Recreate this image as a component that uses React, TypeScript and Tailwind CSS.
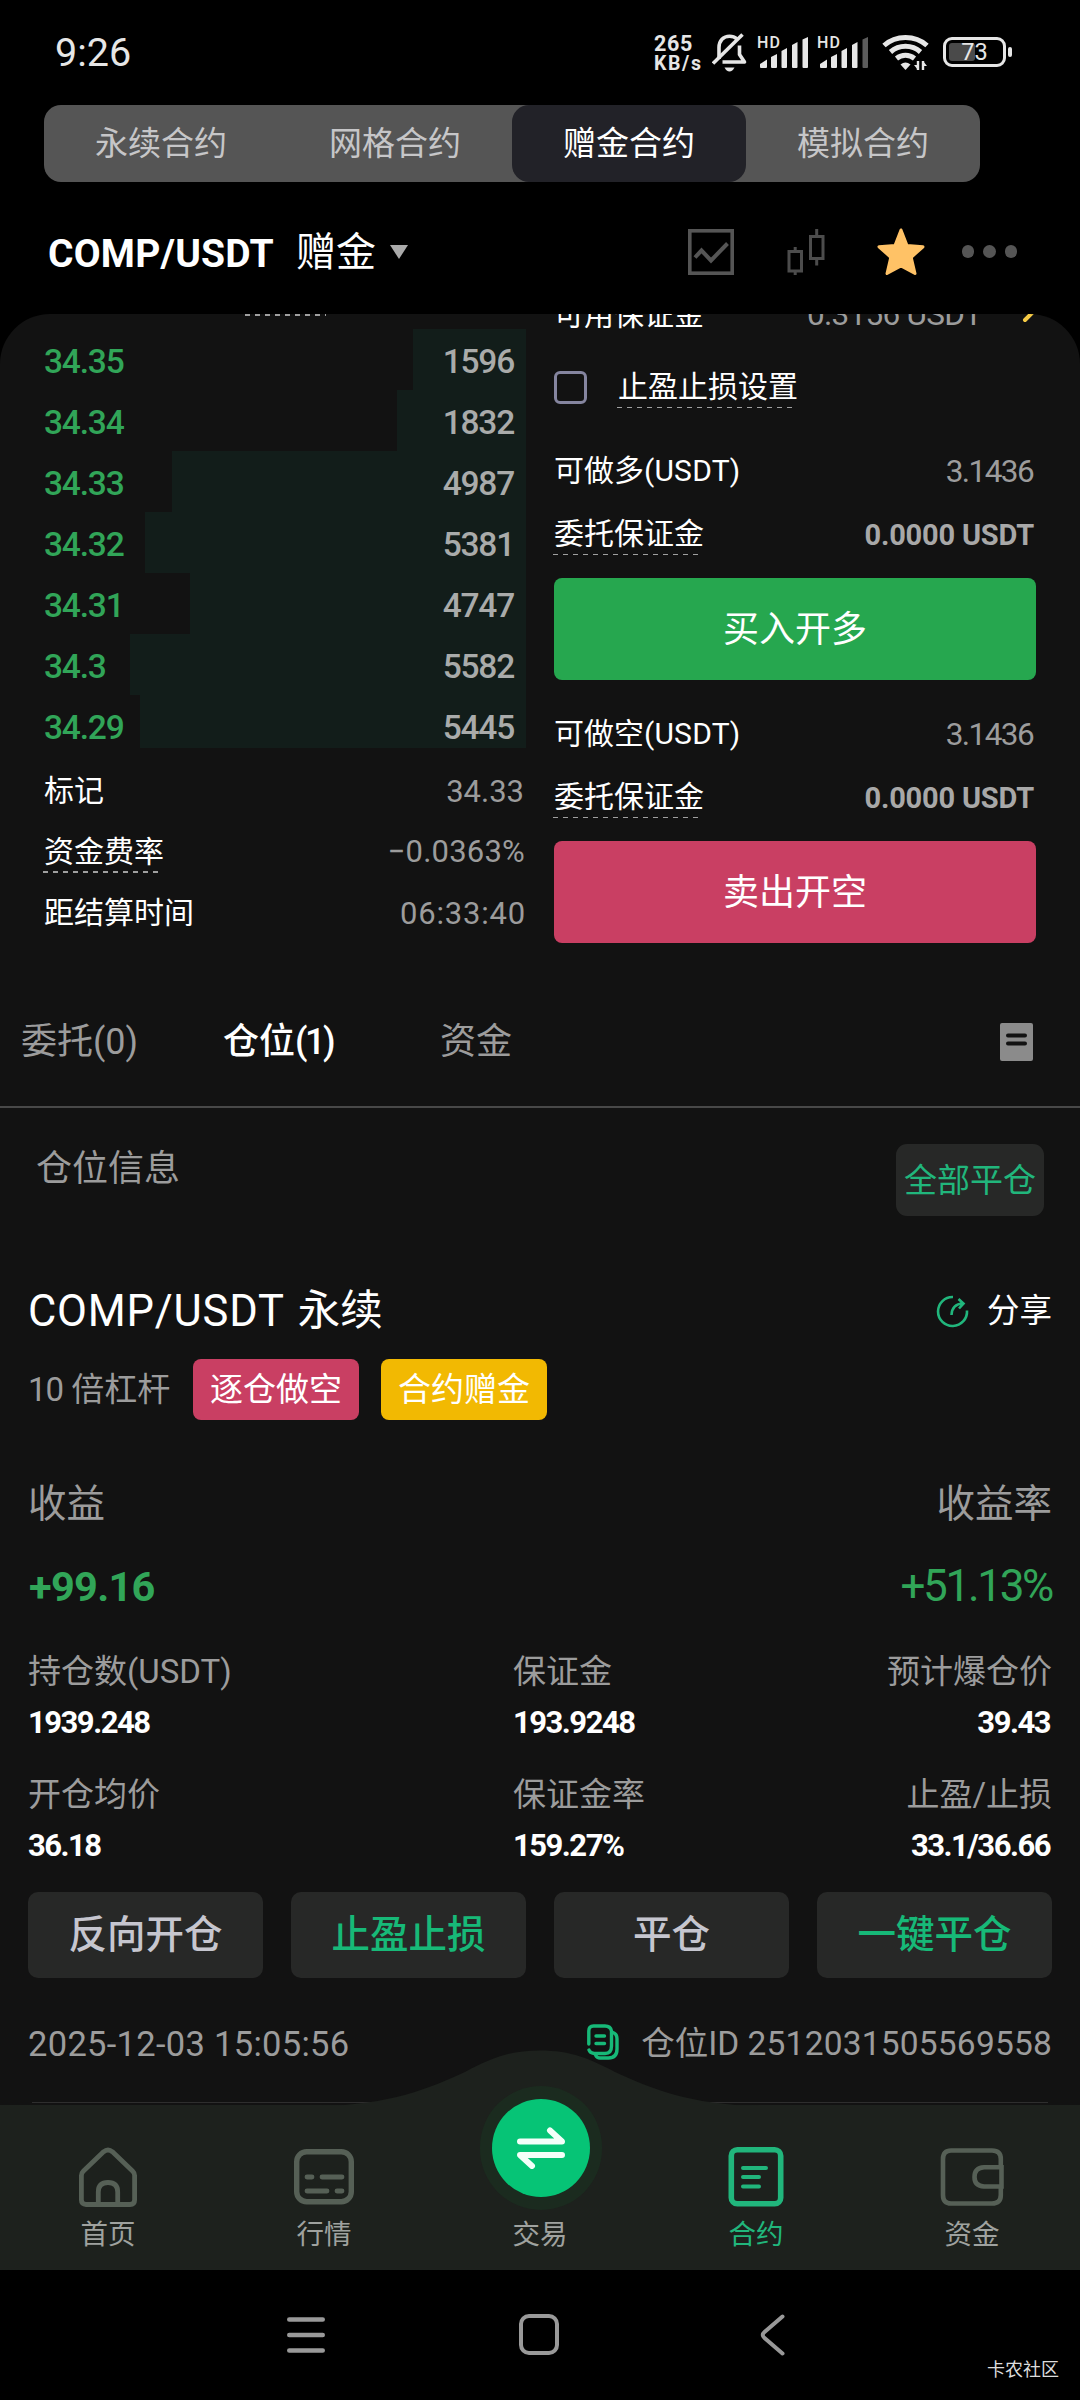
import React from "react";
import clsx from "clsx";

const modes = ["永续合约", "网格合约", "赠金合约", "模拟合约"];

const bids = [
  { price: "34.35", amount: "1596", depth: 113 },
  { price: "34.34", amount: "1832", depth: 129 },
  { price: "34.33", amount: "4987", depth: 354 },
  { price: "34.32", amount: "5381", depth: 381 },
  { price: "34.31", amount: "4747", depth: 336 },
  { price: "34.3", amount: "5582", depth: 396 },
  { price: "34.29", amount: "5445", depth: 386 },
];

const actions = [
  { label: "反向开仓", green: false },
  { label: "止盈止损", green: true },
  { label: "平仓", green: false },
  { label: "一键平仓", green: true },
];

function Dashes({ className }: { className?: string }) {
  return (
    <div className={clsx("bg-[repeating-linear-gradient(90deg,#a0a0a0_0,#a0a0a0_5px,transparent_5px,transparent_10px)]", className)} />
  );
}

function Dotted({ children }: { children: React.ReactNode }) {
  return (
    <div className="relative">
      {children}
      <Dashes className="absolute h-[1.500px] -left-[1px] right-[2px] -bottom-[6px]" />
    </div>
  );
}

function Signal({ weak }: { weak?: boolean }) {
  return (
    <div className="relative w-[50px] h-[33px]">
      <span className="absolute -left-[3px] -top-[1px] text-[16px] leading-none font-medium tracking-[1.2px]">HD</span>
      <svg viewBox="0 0 50 33" className="w-[50px] h-[33px]" fill="currentColor">
        <path d="M0 31V28L7 23.500V31Q7 32 6 32H1Q0 32 0 31Z" />
        <path d="M11 31V21L17 18V31Q17 32 16 32H12Q11 32 11 31Z" />
        <path d="M21.500 31V15L27 12V31Q27 32 26 32H22.500Q21.500 32 21.500 31Z" />
        <path d="M32 31V9L37.500 6V31Q37.500 32 36.500 32H33Q32 32 32 31Z" />
        <path d="M42.500 31V3.500L48 1V31Q48 32 47 32H43.500Q42.500 32 42.500 31Z" opacity={weak ? 0.4 : 1} />
      </svg>
    </div>
  );
}

function StatusBar() {
  return (
    <div className="h-[105px] flex justify-between pl-[55px] pr-[68px] text-[#e6e6e6]">
      <div className="mt-[33px] text-[39.500px] leading-[40px]">9:26</div>
      <div className="flex items-start">
        <div className="mt-[34px] w-[51px] mr-[7px] font-bold text-[21.500px]">
          <div className="h-[20px] leading-[20px] tracking-[0.7px]">265</div>
          <div className="h-[20px] leading-[20px] text-[19.500px] tracking-[1.6px] whitespace-nowrap">KB/s</div>
        </div>
        <svg viewBox="0 0 36 40" className="w-[36px] h-[40px] mt-[33px] mr-[12px]" fill="none" stroke="currentColor" strokeWidth="3.600">
          <path d="M7 26V14.500C7 7.500 11.500 3.200 17.500 3.200C20.500 3.200 23 4.200 25 6" />
          <path d="M27.500 12.500V21.500L32.500 29H10.500" strokeLinejoin="round" />
          <path d="M1 30.500L30.500 1.500" />
          <path d="M12.500 34.500H22.500Q20.500 38.500 17.500 38.500T12.500 34.500Z" fill="currentColor" stroke="none" />
        </svg>
        <div className="mt-[36px] mr-[10px]"><Signal /></div>
        <div className="mt-[36px] mr-[12px]"><Signal weak /></div>
        <svg viewBox="0 0 48 37" className="w-[48px] h-[37px] mt-[34px] mr-[13px]" fill="none" stroke="currentColor" strokeWidth="5">
          <path d="M2 11.500Q11 3.500 23.500 3.500T45 11.500" />
          <path d="M8.500 18Q15 12.300 23.500 12.300T38.500 18" />
          <path d="M14.500 24.500Q18.500 21.300 23.500 21.300T32.500 24.500" />
          <path d="M18.500 30.500Q23.500 26.500 28.500 30.500L23.500 36Z" fill="currentColor" stroke="none" />
          <path d="M36 27V36M41 36V27" strokeWidth="2.400" />
          <path d="M32 31L36 36V31ZM41 27L45 32H41Z" fill="currentColor" stroke="none" />
        </svg>
        <div className="mt-[37px] flex items-center">
          <div className="relative w-[63px] h-[30px] rounded-[9px] border-[3px] border-[#e6e6e6] flex items-center justify-center">
            <div className="absolute left-[3px] top-[3px] w-[26px] h-[18px] rounded-[3px] bg-[#4a4a4a]" />
            <span className="relative mt-[2px] text-[23.500px] leading-none">73</span>
          </div>
          <div className="ml-[2px] w-[4px] h-[10px] rounded-[2px] bg-[#e6e6e6]" />
        </div>
      </div>
    </div>
  );
}

function ModeTabs() {
  return (
    <div className="ml-[44px] w-[936px] h-[77px] flex rounded-[17px] bg-[#555555]">
      {modes.map((m) => (
        <div
          key={m}
          className={clsx(
            "flex-1 flex items-center justify-center rounded-[17px] text-[33px] leading-none",
            m === "赠金合约" ? "bg-[#222228] text-white" : "text-[#c6c6c8]"
          )}
        >
          {m}
        </div>
      ))}
    </div>
  );
}

function PairHeader() {
  return (
    <div className="h-[132px] pt-[7px] pl-[48px] pr-[63px] flex items-center justify-between">
      <div className="flex items-center text-white">
        <span className="text-[39px] leading-none font-bold tracking-[0.2px] mt-[6px]">COMP/USDT</span>
        <span className="ml-[22px] mt-[2px] text-[40px] leading-none">赠金</span>
        <svg viewBox="0 0 18 14" className="ml-[14px] w-[18px] h-[14px]" fill="#aaaaaa"><path d="M0 0H18L9 14Z" /></svg>
      </div>
      <div className="flex items-center">
        <svg viewBox="0 0 46 46" className="w-[46px] h-[46px]" fill="none" stroke="#555555" strokeWidth="3.600">
          <rect x="1.800" y="1.800" width="42.400" height="42.400" />
          <path d="M7 28.500L13.500 21.500L23 31.500L39.500 14.500" strokeWidth="4" />
        </svg>
        <svg viewBox="0 0 38 46" className="ml-[53px] w-[38px] h-[46px]" fill="none" stroke="#4c4c4c" strokeWidth="3">
          <rect x="2" y="22.500" width="12.500" height="19.500" />
          <path d="M8.200 18V22M8.200 42V46" />
          <rect x="23.500" y="7.500" width="12.500" height="22" />
          <path d="M29.700 0V7M29.700 30V36.500" />
        </svg>
        <svg viewBox="0 0 48 48" className="ml-[52px] w-[48px] h-[48px]" fill="#ffc266" stroke="#ffc266" strokeWidth="3" strokeLinejoin="round">
          <path d="M24 2L30 17.500L46 18.800L34.200 29.300L38 45.500L24 38L10 45.500L13.800 29.300L2 18.800L18 17.500Z" />
        </svg>
        <div className="ml-[37px] flex gap-[9px]">
          <span className="w-[12.500px] h-[12.500px] rounded-full bg-[#555555]" />
          <span className="w-[12.500px] h-[12.500px] rounded-full bg-[#555555]" />
          <span className="w-[12.500px] h-[12.500px] rounded-full bg-[#555555]" />
        </div>
      </div>
    </div>
  );
}

function OrderBook() {
  return (
    <div className="ml-[44px] w-[482px]">
      <div className="h-[15px]"><Dashes className="ml-[201px] w-[81px] h-[2px]" /></div>
      <div className="h-[419px] overflow-hidden">
        {bids.map((b) => (
          <div key={b.price} className="relative h-[61px] flex items-center justify-between pr-[12px] pt-[5px] text-[33.500px] leading-none font-medium tracking-[-1.2px]">
            <div className="absolute right-0 top-0 h-full bg-[#121d1a]" style={{ width: b.depth }} />
            <span className="relative text-[#31a558]">{b.price}</span>
            <span className="relative text-[#a9abaa]">{b.amount}</span>
          </div>
        ))}
      </div>
      <div className="mt-[12px] text-[30px] leading-none text-white">
        <div className="h-[61px] flex items-center justify-between">
          <span>标记</span>
          <span className="pt-[1px] pr-[2px] text-[31px] text-[#9c9c9c]">34.33</span>
        </div>
        <div className="h-[61px] flex items-center justify-between">
          <Dotted>资金费率</Dotted>
          <span className="pr-px text-[31px] tracking-[0.2px] text-[#9c9c9c]">−0.0363%</span>
        </div>
        <div className="h-[61px] flex items-center justify-between">
          <span>距结算时间</span>
          <span className="pt-[1px] text-[31px] tracking-[0.8px] text-[#9c9c9c]">06:33:40</span>
        </div>
      </div>
    </div>
  );
}

function OrderSide({ label, action, color }: { label: string; action: string; color: string }) {
  return (
    <div>
      <div className="h-[40px] flex items-center justify-between">
        <span>{label}<span className="tracking-[0.2px]">(USDT)</span></span>
        <span className="pt-[2px] pr-[3px] text-[31.500px] tracking-[-1.6px] text-[#9c9c9c]">3.1436</span>
      </div>
      <div className="mt-[23px] h-[40px] flex items-center justify-between">
        <Dotted>委托保证金</Dotted>
        <span className="pt-[2px] pr-[2px] text-[29px] tracking-[-0.2px] font-bold text-[#a8a8a8]">0.0000 USDT</span>
      </div>
      <div className={clsx("mt-[24px] h-[102px] pt-[2px] rounded-[8px] flex items-center justify-center text-[36px]", color)}>{action}</div>
    </div>
  );
}

function OrderForm() {
  return (
    <div className="ml-[28px] w-[482px] text-[30px] leading-none text-white">
      <div className="-mt-[14px] h-[30px] flex items-center">
        <span>可用保证金</span>
        <span className="ml-auto text-[31.500px] tracking-[-0.700px] text-[#9c9c9c]">0.3156 USDT</span>
        <svg viewBox="0 0 36 24" className="ml-[18px] -mt-[6px] w-[36px] h-[24px]" fill="none" stroke="#f5ca45" strokeWidth="4" strokeLinecap="round" strokeLinejoin="round">
          <path d="M2 12H33M24 3L33 12L25 20" />
        </svg>
      </div>
      <div className="mt-[40px] h-[34px] flex items-center">
        <div className="w-[33px] h-[33px] rounded-[6px] border-[3px] border-[#85859f]" />
        <div className="ml-[31px]"><Dotted>止盈止损设置</Dotted></div>
      </div>
      <div className="mt-[47px]">
        <OrderSide label="可做多" action="买入开多" color="bg-[#26a74f]" />
      </div>
      <div className="mt-[34px]">
        <OrderSide label="可做空" action="卖出开空" color="bg-[#c93f63]" />
      </div>
    </div>
  );
}

function RecordTabs() {
  return (
    <div className="h-[164px] pt-[33px] pl-[21px] pr-[47px] border-b-2 border-[#484848] flex items-center text-[36px] leading-none text-[#9c9c9c]">
      <span className="w-[202px]">委托(0)</span>
      <span className="w-[217px] text-white font-medium">仓位<span className="tracking-[-2.5px]">(1)</span></span>
      <span>资金</span>
      <svg viewBox="0 0 33 38" className="ml-auto w-[33px] h-[38px]">
        <rect width="33" height="38" rx="2" fill="#8b8b8b" />
        <path d="M8 12.500H25M8 20.500H25" stroke="#121212" strokeWidth="4" strokeLinecap="round" />
      </svg>
    </div>
  );
}

function Cell({ label, value, right }: { label: string; value: string; right?: boolean }) {
  return (
    <div className={clsx(right && "text-right")}>
      <div className="h-[40px] leading-[41px] text-[33px] text-[#9c9c9c]">{label}</div>
      <div className={clsx("mt-[11px] h-[40px] leading-[42px] text-[31px] tracking-[-1.5px] font-bold text-white", right && "pr-[2px]")}>{value}</div>
    </div>
  );
}

function Position() {
  return (
    <div className="pl-[28px] pr-[28px]">
      <div className="mt-[36px] h-[72px] pl-[8px] pr-[8px] flex">
        <span className="text-[36px] leading-[50px] text-[#9c9c9c]">仓位信息</span>
        <div className="ml-auto w-[148px] rounded-[11px] bg-[#272827] flex items-center justify-center text-[33px] leading-none text-[#21b67c]">全部平仓</div>
      </div>
      <div className="mt-[65px] h-[60px] flex items-center leading-none text-white">
        <span className="mt-[2px] text-[43.500px] tracking-[0.8px]">COMP/USDT</span>
        <span className="ml-[13px] text-[42.500px]">永续</span>
        <svg viewBox="0 0 33 33" className="ml-auto w-[33px] h-[33px]" fill="none" stroke="#21b67c" strokeWidth="2.600">
          <path d="M17 2A14.500 14.500 0 1 0 31 15.500" />
          <path d="M15.500 20Q16 9 27 8.500M22.500 4L27.500 8.500L23 13.500" />
        </svg>
        <span className="ml-[18px] text-[32.500px]">分享</span>
      </div>
      <div className="mt-[18px] h-[61px] flex items-center text-[33px] leading-none text-white">
        <span className="w-[165px] text-[#9c9c9c]"><span className="tracking-[-1px]">10</span> 倍杠杆</span>
        <span className="w-[166px] h-full rounded-[8px] bg-[#c93f63] flex items-center justify-center">逐仓做空</span>
        <span className="ml-[22px] w-[166px] h-full rounded-[8px] bg-[#f2b902] flex items-center justify-center">合约赠金</span>
      </div>
      <div className="mt-[58px] h-[50px] flex justify-between text-[38.500px] leading-[51px] text-[#9c9c9c]">
        <span>收益</span>
        <span>收益率</span>
      </div>
      <div className="mt-[33px] h-[50px] flex justify-between leading-[51px] text-[#31a558]">
        <span className="pl-px text-[41.500px] tracking-[-0.7px] font-bold">+99.16</span>
        <span className="text-[44px] tracking-[-2.300px]">+51.13%</span>
      </div>
      <div className="mt-[40px] grid grid-cols-[485px_1fr_auto] gap-y-[32px]">
        <Cell label="持仓数(USDT)" value="1939.248" />
        <Cell label="保证金" value="193.9248" />
        <Cell label="预计爆仓价" value="39.43" right />
        <Cell label="开仓均价" value="36.18" />
        <Cell label="保证金率" value="159.27%" />
        <Cell label="止盈/止损" value="33.1/36.66" right />
      </div>
      <div className="mt-[27px] h-[86px] grid grid-cols-4 gap-[28px]">
        {actions.map((a) => (
          <div key={a.label} className={clsx("rounded-[10px] bg-[#272827] flex items-center justify-center text-[38.500px] leading-none font-medium", a.green ? "text-[#17b978]" : "text-[#c6c6cf]")}>
            {a.label}
          </div>
        ))}
      </div>
      <div className="mt-[46px] h-[40px] flex items-center text-[33px] leading-none text-[#9c9c9c]">
        <span className="text-[34.500px] tracking-[0.3px]">2025-12-03 15:05:56</span>
        <svg viewBox="0 0 32 36" className="ml-auto -mt-[4px] w-[32px] h-[36px]" fill="none" stroke="#17b978" strokeWidth="3.400" strokeLinecap="round">
          <path d="M1.800 20V7Q1.800 2 6.500 2H18Q23.500 2 24.500 7V22Q24.500 29.500 18 29.500H7Q3 29 2 26" />
          <path d="M26 8.500Q30 10 30 15V25Q30 34 21.500 34H13Q10 34 8.800 31.500" />
          <path d="M9 12H17.500M9 19.500H17.500" />
        </svg>
        <span className="ml-[22px] text-[33.500px]">仓位ID <span className="tracking-[0.200px]">2512031505569558</span></span>
      </div>
      <div className="mt-[38px] mx-[4px] h-px bg-[#2e2e2e]" />
    </div>
  );
}

function NavItem({ label, active, children }: { label: string; active?: boolean; children?: React.ReactNode }) {
  return (
    <div className={clsx("flex-1 flex flex-col items-center", active ? "text-[#21b67c]" : "text-[#566056]")}>
      <div className="mt-[42px] h-[62px] flex justify-center">{children}</div>
      <div className={clsx("mt-[12px] text-[27.500px] leading-[28px]", !active && "text-[#9fa29f]")}>{label}</div>
    </div>
  );
}

function BottomNav() {
  return (
    <div className="relative h-[165px] flex bg-[#1d211d]">
      <svg viewBox="0 0 440 56" className="absolute left-[320px] -top-[55px] w-[440px] h-[56px]" fill="#1d211d">
        <path d="M0 56C70 55 110 38 145 22C170 9 188 0.500 220 0.500C252 0.500 270 9 295 22C330 38 370 55 440 56Z" />
      </svg>
      <NavItem label="首页">
        <svg viewBox="0 0 60 60" className="w-[60px] h-[60px]" fill="none" stroke="currentColor" strokeWidth="4.800">
          <path d="M3.400 28.500Q3.400 26 5.500 24L25.500 4.800Q30 1 34.500 4.800L54.500 24Q56.600 26 56.600 28.500V53Q56.600 57.500 52 57.500H8Q3.400 57.500 3.400 53Z" />
          <path d="M20.300 57V45Q20.300 35.500 30 35.500T39.700 45V57" />
        </svg>
      </NavItem>
      <NavItem label="行情">
        <svg viewBox="0 0 60 58" className="mt-[1px] w-[60px] h-[58px]" fill="none" stroke="currentColor" strokeWidth="5.400">
          <rect x="2.700" y="3.700" width="54.600" height="50" rx="10" />
          <path d="M13 29H18M28 29H48M13 43H33M43 43H48" strokeLinecap="round" strokeWidth="4.800" />
        </svg>
      </NavItem>
      <NavItem label="交易" />
      <NavItem label="合约" active>
        <svg viewBox="0 0 56 60" className="w-[56px] h-[60px]" fill="none" stroke="currentColor" strokeWidth="5.600">
          <rect x="3.300" y="2.800" width="49.400" height="54" rx="6" />
          <path d="M15 21H38M15 30H31M15 39.500H31" strokeLinecap="round" strokeWidth="4" />
        </svg>
      </NavItem>
      <NavItem label="资金">
        <svg viewBox="0 0 64 60" className="w-[64px] h-[60px]" fill="none" stroke="currentColor" strokeWidth="4.600">
          <path d="M60.800 20V12Q60.800 3.500 52 3.500H11Q3 3.500 3 12V48Q3 56.500 11 56.500H52Q60.800 56.500 60.800 48V40" />
          <path d="M61.500 20.300H44Q34.500 21 34.500 30T44 39.500H61.500Z" />
        </svg>
      </NavItem>
      <div className="absolute left-[480px] -top-[19px] w-[122px] h-[124px] rounded-full bg-[#1b2b1f] flex items-center justify-center">
        <div className="w-[98px] h-[98px] rounded-full bg-[#06c476] flex items-center justify-center">
          <svg viewBox="0 0 48 42" className="w-[48px] h-[42px]" fill="none" stroke="#f4fff9" strokeWidth="6" strokeLinecap="round" strokeLinejoin="round">
            <path d="M3 14.500H45L33 3.500" />
            <path d="M45 28H3L15 39" />
          </svg>
        </div>
      </div>
    </div>
  );
}

function SystemNav() {
  return (
    <div className="relative h-[130px] bg-black">
      <div className="h-full pl-[287px] pt-[43px] flex items-start">
        <svg viewBox="0 0 38 44" className="w-[38px] h-[44px]" stroke="#999999" strokeWidth="4.600" strokeLinecap="round">
          <path d="M2.300 6.500H35.700M2.300 22H35.700M2.300 37.500H35.700" />
        </svg>
        <div className="ml-[194px] mt-[1px] w-[40px] h-[41px] rounded-[10px] border-4 border-[#999999]" />
        <svg viewBox="0 0 26 44" className="ml-[200px] w-[26px] h-[44px]" fill="none" stroke="#999999" strokeWidth="4" strokeLinecap="round" strokeLinejoin="round">
          <path d="M23.500 3.500L5.500 19Q2 22 5.500 25L23.500 40.500" />
        </svg>
      </div>
      <span className="absolute right-[21px] bottom-[21px] text-[18px] leading-none text-[#dddddd]">卡农社区</span>
    </div>
  );
}

function App() {
  return (
    <div className="w-[1080px] h-[2400px] flex flex-col overflow-hidden bg-black font-['Roboto','Noto_Sans_CJK_SC',sans-serif]">
      <StatusBar />
      <ModeTabs />
      <PairHeader />
      <div className="h-[1791px] rounded-t-[50px] overflow-hidden bg-[#121212]">
        <div className="h-[630px] flex">
          <OrderBook />
          <OrderForm />
        </div>
        <RecordTabs />
        <Position />
      </div>
      <BottomNav />
      <SystemNav />
    </div>
  );
}

export default App;
